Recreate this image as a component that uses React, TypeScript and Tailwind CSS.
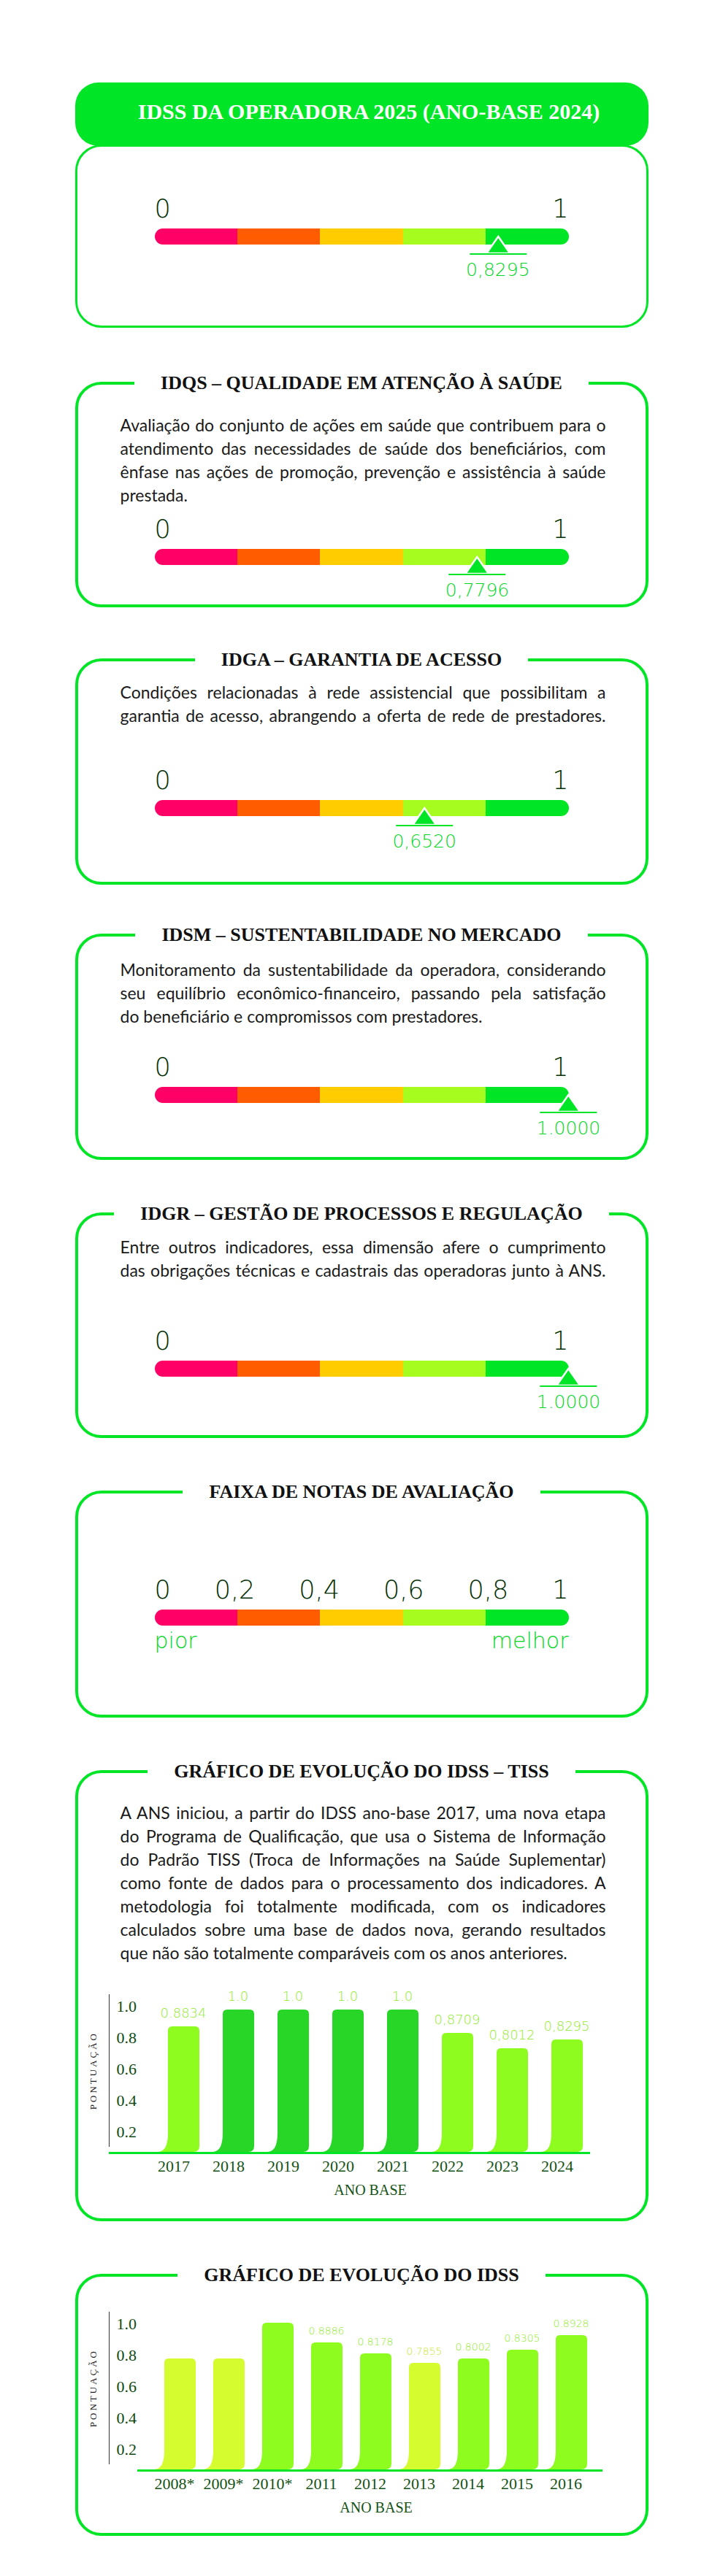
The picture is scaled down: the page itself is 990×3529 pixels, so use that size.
import type { ReactNode } from 'react';

const segs = ['bg-[#ff0066]', 'bg-[#ff5c00]', 'bg-[#ffcc00]', 'bg-[#a5fc1e]', 'bg-[#00e626]'];
const numFont = "font-['DejaVu_Sans',sans-serif] font-extralight";
const serif = "font-['Liberation_Serif',serif]";

function ScaleBar() {
  return (
    <div className="flex h-[22px] overflow-hidden rounded-full">
      {segs.map((c) => (
        <div key={c} className={`flex-1 ${c}`} />
      ))}
    </div>
  );
}

function Gauge({ value, label, className }: { value: number; label: string; className: string }) {
  return (
    <div className={`w-[567px] ${className}`}>
      <div className={`flex h-[35px] justify-between text-[35px] leading-[35px] text-[#053005] ${numFont}`}>
        <span>0</span>
        <span>1</span>
      </div>
      <div className="relative mt-[9px]">
        <ScaleBar />
        {/* marcador do valor */}
        <div
          className="absolute top-[10px] flex -translate-x-1/2 flex-col items-center"
          style={{ left: `${value * 100}%` }}
        >
          <svg width="78" height="26" viewBox="0 0 78 26" className="block overflow-visible">
            <polygon points="39,1 23,24 55,24" fill="#00e626" stroke="#ffffff" strokeWidth="2.5" />
            <rect x="0" y="24" width="78" height="2" fill="#00e626" />
          </svg>
          <span className={`mt-[8px] whitespace-nowrap text-[25px] leading-[25px] text-[#00d622] ${numFont}`}>
            {label}
          </span>
        </div>
      </div>
    </div>
  );
}

function Card({
  title,
  className,
  children,
}: {
  title: string;
  className: string;
  children: ReactNode;
}) {
  return (
    <fieldset className={`rounded-[36px] border-4 border-[#00e626] ${className}`}>
      <legend
        className={`mx-auto px-[36px] text-[26px] font-bold leading-[30px] text-[#111111] ${serif}`}
      >
        {title}
      </legend>
      {children}
    </fieldset>
  );
}

function Para({ lines, lastShort, className }: { lines: string[]; lastShort: boolean; className: string }) {
  return (
    <div
      className={`pl-[58px] pr-[54px] font-['Lato',sans-serif] text-[23px] leading-[32px] text-[#1a1a1a] ${className}`}
    >
      {lines.map((l, i) =>
        lastShort && i === lines.length - 1 ? (
          <span key={i} className="block whitespace-nowrap">
            {l}
          </span>
        ) : (
          <span key={i} className="block whitespace-nowrap [text-align-last:justify]">
            {l}
          </span>
        ),
      )}
    </div>
  );
}

function BarShape({ h, color }: { h: number; color: string }) {
  const x0 = 14;
  const x1 = 57;
  const d = `M${x0} 6 Q${x0} 0 ${x0 + 6} 0 L${x1 - 6} 0 Q${x1} 0 ${x1} 6 L${x1} ${h - 8} Q${x1} ${h} ${x1 - 8} ${h} L0 ${h} Q${x0} ${h} ${x0} ${h - 26} Z`;
  return (
    <svg width="57" height={h} viewBox={`0 0 57 ${h}`} className="block">
      <path d={d} fill={color} />
    </svg>
  );
}

type Bar = { year: string; h: number; color: string; value?: string; labelColor?: string };

function Chart({
  bars,
  tickW,
  colW,
  labelSize,
  baseClass,
  yearClass,
  className,
}: {
  bars: Bar[];
  tickW: string;
  colW: string;
  labelSize: string;
  baseClass: string;
  yearClass: string;
  className: string;
}) {
  const ticks = ['1.0', '0.8', '0.6', '0.4', '0.2'];
  return (
    <div className={`flex ${className}`}>
      <div className="flex h-[209px] w-[42px] items-center justify-center">
        <span className={`rotate-180 text-[13px] tracking-[3px] text-[#222222] [writing-mode:vertical-rl] ${serif}`}>
          PONTUAÇÃO
        </span>
      </div>
      <div className="flex flex-col">
        <div className="flex h-[216px]">
          <div
            className={`flex h-[209px] flex-col gap-[23px] border-l border-[#333333] pl-[10px] pt-[7px] text-[22px] leading-[20px] text-[#0f4a12] ${tickW} ${serif}`}
          >
            {ticks.map((t) => (
              <span key={t} className="h-[20px]">
                {t}
              </span>
            ))}
          </div>
          <div className="flex items-end">
            {bars.map((b) => (
              <div key={b.year} className={`flex flex-col items-center ${colW}`}>
                {b.value && (
                  <div
                    className={`mb-[9px] flex w-[57px] justify-center whitespace-nowrap pl-[14px] ${labelSize} ${numFont}`}
                    style={{ color: b.labelColor }}
                  >
                    {b.value}
                  </div>
                )}
                <BarShape h={b.h} color={b.color} />
              </div>
            ))}
          </div>
        </div>
        <div className={`h-[3px] bg-[#00e626] ${baseClass}`} />
        <div className="mt-[6px] flex">
          <div className={tickW} />
          {bars.map((b) => (
            <span
              key={b.year}
              className={`text-center text-[22px] leading-[22px] text-[#155215] ${colW} ${yearClass} ${serif}`}
            >
              {b.year}
            </span>
          ))}
        </div>
        <div className="mt-[11px] flex">
          <div className={tickW} />
          <span className={`flex-1 text-center text-[20px] leading-[20px] text-[#155215] ${serif}`}>ANO BASE</span>
        </div>
      </div>
    </div>
  );
}

const lime = '#8dfc1e';
const deep = '#28d628';
const yellow = '#d4fc2e';
const limeLabel = '#8fea2a';

const tissBars: Bar[] = [
  { year: '2017', h: 172, color: lime, value: '0.8834', labelColor: limeLabel },
  { year: '2018', h: 195, color: deep, value: '1.0', labelColor: limeLabel },
  { year: '2019', h: 195, color: deep, value: '1.0', labelColor: limeLabel },
  { year: '2020', h: 195, color: deep, value: '1.0', labelColor: limeLabel },
  { year: '2021', h: 195, color: deep, value: '1.0', labelColor: limeLabel },
  { year: '2022', h: 163, color: lime, value: '0,8709', labelColor: limeLabel },
  { year: '2023', h: 142, color: lime, value: '0,8012', labelColor: limeLabel },
  { year: '2024', h: 154, color: lime, value: '0,8295', labelColor: limeLabel },
];

const idssBars: Bar[] = [
  { year: '2008*', h: 152, color: yellow },
  { year: '2009*', h: 152, color: yellow },
  { year: '2010*', h: 201, color: lime },
  { year: '2011', h: 174, color: lime, value: '0.8886', labelColor: limeLabel },
  { year: '2012', h: 159, color: lime, value: '0.8178', labelColor: limeLabel },
  { year: '2013', h: 146, color: yellow, value: '0.7855', labelColor: '#c6e62a' },
  { year: '2014', h: 152, color: lime, value: '0.8002', labelColor: limeLabel },
  { year: '2015', h: 164, color: lime, value: '0.8305', labelColor: limeLabel },
  { year: '2016', h: 184, color: lime, value: '0.8928', labelColor: limeLabel },
];

export default function App() {
  return (
    <div className="min-h-screen bg-white pb-[55px] pt-[113px]">
      <div className="mx-auto w-[785px]">
        {/* Cabeçalho */}
        <div className="flex h-[87px] items-center justify-center rounded-[32px] bg-[#00e626] pb-[8px] pl-[20px]">
          <h1 className={`text-[30px] font-bold leading-none text-white ${serif}`}>
            IDSS DA OPERADORA 2025 (ANO-BASE 2024)
          </h1>
        </div>
        <div className="-mt-[2px] h-[251px] rounded-[36px] border-[3px] border-[#00e626] pt-[68px]">
          <Gauge value={0.8295} label="0,8295" className="ml-[106px]" />
        </div>

        <Card title="IDQS – QUALIDADE EM ATENÇÃO À SAÚDE" className="mt-[61px] h-[322px]">
          <Para
            className="mt-[26px]"
            lastShort
            lines={[
              'Avaliação do conjunto de ações em saúde que contribuem para o',
              'atendimento das necessidades de saúde dos beneficiários, com',
              'ênfase nas ações de promoção, prevenção e assistência à saúde',
              'prestada.',
            ]}
          />
          <Gauge value={0.7796} label="0,7796" className="ml-[105px] mt-[14px]" />
        </Card>

        <Card title="IDGA – GARANTIA DE ACESSO" className="mt-[57px] h-[323px]">
          <Para
            className="mt-[13px]"
            lastShort={false}
            lines={[
              'Condições relacionadas à rede assistencial que possibilitam a',
              'garantia de acesso, abrangendo a oferta de rede de prestadores.',
            ]}
          />
          <Gauge value={0.652} label="0,6520" className="ml-[105px] mt-[56px]" />
        </Card>

        <Card title="IDSM – SUSTENTABILIDADE NO MERCADO" className="mt-[54px] h-[323px]">
          <Para
            className="mt-[16px]"
            lastShort
            lines={[
              'Monitoramento da sustentabilidade da operadora, considerando',
              'seu equilíbrio econômico-financeiro, passando pela satisfação',
              'do beneficiário e compromissos com prestadores.',
            ]}
          />
          <Gauge value={1} label="1.0000" className="ml-[105px] mt-[37px]" />
        </Card>

        <Card title="IDGR – GESTÃO DE PROCESSOS E REGULAÇÃO" className="mt-[59px] h-[322px]">
          <Para
            className="mt-[14px]"
            lastShort={false}
            lines={[
              'Entre outros indicadores, essa dimensão afere o cumprimento',
              'das obrigações técnicas e cadastrais das operadoras junto à ANS.',
            ]}
          />
          <Gauge value={1} label="1.0000" className="ml-[105px] mt-[64px]" />
        </Card>

        <Card title="FAIXA DE NOTAS DE AVALIAÇÃO" className="mt-[59px] h-[324px]">
          <div className="ml-[105px] mt-[102px] w-[567px]">
            <div className={`flex h-[35px] justify-between text-[35px] leading-[35px] text-[#053005] ${numFont}`}>
              <span>0</span>
              <span>0,2</span>
              <span>0,4</span>
              <span>0,6</span>
              <span>0,8</span>
              <span>1</span>
            </div>
            <div className="mt-[9px]">
              <ScaleBar />
            </div>
            <div className={`mt-[6px] flex justify-between text-[30px] leading-[30px] text-[#00d622] ${numFont}`}>
              <span>pior</span>
              <span>melhor</span>
            </div>
          </div>
        </Card>

        <Card title="GRÁFICO DE EVOLUÇÃO DO IDSS – TISS" className="mt-[59px] h-[631px]">
          <Para
            className="mt-[25px]"
            lastShort
            lines={[
              'A ANS iniciou, a partir do IDSS ano-base 2017, uma nova etapa',
              'do Programa de Qualificação, que usa o Sistema de Informação',
              'do Padrão TISS (Troca de Informações na Saúde Suplementar)',
              'como fonte de dados para o processamento dos indicadores. A',
              'metodologia foi totalmente modificada, com os indicadores',
              'calculados sobre uma base de dados nova, gerando resultados',
              'que não são totalmente comparáveis com os anos anteriores.',
            ]}
          />
          <Chart
            className="mt-[41px]"
            bars={tissBars}
            tickW="w-[58px]"
            colW="w-[75px]"
            labelSize="text-[18px] leading-[18px]"
            baseClass="w-[659px]"
            yearClass="pr-[12px]"
          />
        </Card>

        <Card title="GRÁFICO DE EVOLUÇÃO DO IDSS" className="mt-[59px] h-[372px]">
          <Chart
            className="mt-[35px]"
            bars={idssBars}
            tickW="w-[57px]"
            colW="w-[67px]"
            labelSize="text-[14px] leading-[14px]"
            baseClass="ml-[39px] w-[637px]"
            yearClass=""
          />
        </Card>
      </div>
    </div>
  );
}
